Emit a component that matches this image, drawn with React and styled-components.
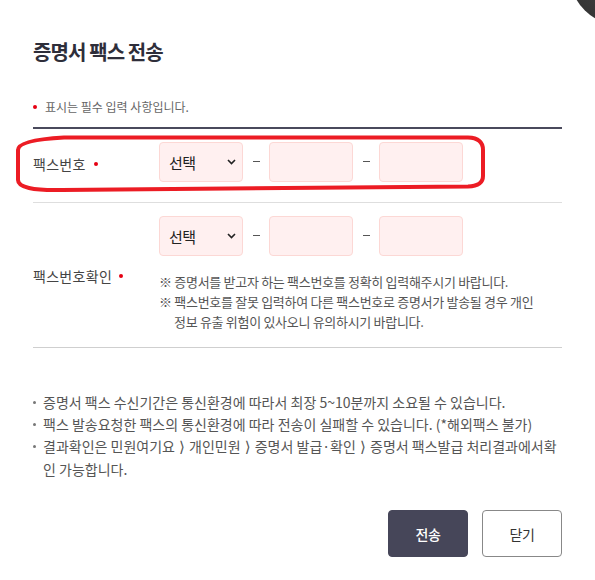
import React from 'react'
import styled, { createGlobalStyle } from 'styled-components'

// #region Styles
const GlobalStyle = createGlobalStyle`
  html, body {
    margin: 0;
    padding: 0;
    background: #fff;
  }
  body {
    font-family: "Noto Sans CJK KR", "Noto Sans", sans-serif;
    color: #333;
  }
  * {
    box-sizing: border-box;
  }
`
const Modal = styled.div`
  position: relative;
  width: 595px;
  height: 580px;
  padding: 38px 33px 0;
  overflow: hidden;
  background: #fff;
`
const CloseCorner = styled.div`
  position: absolute;
  top: -75px;
  left: 570px;
  width: 100px;
  height: 100px;
  border-radius: 50%;
  background: radial-gradient(circle at 60% 40%, #5a5a5a 0%, #3a3a3a 60%, #2e2e2e 100%);
`
const Title = styled.h2`
  margin: 0;
  font-size: 20px;
  line-height: 28px;
  font-weight: 700;
  color: #2e2e3a;
  letter-spacing: -0.9px;
`
const Notice = styled.p`
  display: flex;
  align-items: center;
  margin: 32px 0 11px;
  font-size: 12px;
  line-height: 18px;
  color: #666;
  letter-spacing: 0;
`
const Dot = styled.span`
  display: inline-block;
  flex: none;
  width: 4px;
  height: 4px;
  border-radius: 50%;
  background: #e60012;
  margin: ${({ $gap }) => $gap || '0 8px 0 0'};
`
const Form = styled.div`
  border-top: 2px solid #4a4a5c;
`
const Row = styled.div`
  display: flex;
  align-items: center;
  padding: 13px 0 ${({ $bottom }) => $bottom || '20px'};
  border-bottom: 1px solid ${({ $line }) => $line || '#dedede'};
`
const Label = styled.div`
  display: flex;
  align-items: center;
  flex: none;
  width: 126px;
  font-size: 14px;
  color: #444;
  letter-spacing: 0.3px;
  padding-top: 3px;
`
const Field = styled.div`
  display: flex;
  flex-direction: column;
`
const PhoneGroup = styled.div`
  display: flex;
  align-items: center;
`
const Select = styled.div`
  display: flex;
  align-items: center;
  justify-content: space-between;
  width: 84px;
  height: 40px;
  padding: 0 6px 0 9px;
  border: 1px solid #fcd8d5;
  border-radius: 4px;
  background: #fff0f0;
  font-size: 15px;
  color: #222;
  letter-spacing: -0.5px;
`
const Input = styled.input`
  width: 84px;
  height: 40px;
  border: 1px solid #fcd8d5;
  border-radius: 4px;
  background: #fff0f0;
  outline: none;
`
const Dash = styled.span`
  display: flex;
  justify-content: center;
  width: 26px;
  margin-top: -2px;

  &::before {
    content: '';
    width: 7px;
    height: 1px;
    background: #555;
  }
`
const Notes = styled.ul`
  list-style: none;
  margin: 16px 0 0;
  padding: 0;
  font-size: 13px;
  line-height: 20px;
  color: #555;
  letter-spacing: -0.3px;
`
const Note = styled.li`
  padding-left: 15px;
  text-indent: -15px;
  white-space: nowrap;
`
const Guide = styled.ul`
  list-style: none;
  margin: 43px 0 0;
  padding: 0;
  font-size: 14px;
  line-height: 22px;
  color: #555;
  letter-spacing: 0;
`
const GuideItem = styled.li`
  position: relative;
  padding-left: 10px;
  white-space: nowrap;

  &::before {
    content: '';
    position: absolute;
    left: 0;
    top: 10px;
    width: 3px;
    height: 3px;
    border-radius: 50%;
    background: #777;
  }
`
const Crumb = styled.span`
  font-family: "DejaVu Sans", sans-serif;
  font-size: 15px;
  margin: 0 1px;
`
const Buttons = styled.div`
  display: flex;
  justify-content: flex-end;
  gap: 14px;
  margin-top: 30px;
`
const Button = styled.button`
  width: 80px;
  height: 47px;
  border-radius: 4px;
  font-family: inherit;
  font-size: 14px;
  letter-spacing: -0.5px;
  cursor: pointer;
  border: 1px solid ${({ $primary }) => ($primary ? '#464659' : '#888')};
  background: ${({ $primary }) => ($primary ? '#464659' : '#fff')};
  color: ${({ $primary }) => ($primary ? '#fff' : '#333')};
  font-weight: ${({ $primary }) => ($primary ? 500 : 400)};
`
const Annotation = styled.svg`
  position: absolute;
  top: 0;
  left: 0;
  pointer-events: none;
`
// #endregion

const Chevron = () => (
  <svg width="9" height="6" viewBox="0 0 9 6" fill="none">
    <path d="M1 1l3.5 3.5L8 1" stroke="#222" strokeWidth="1.6" />
  </svg>
)

const PhoneInputs = () => (
  <PhoneGroup>
    <Select>
      선택
      <Chevron />
    </Select>
    <Dash />
    <Input />
    <Dash />
    <Input />
  </PhoneGroup>
)

const App = () => (
  <>
    <GlobalStyle />
    <Modal>
      <CloseCorner />
      <Title>증명서 팩스 전송</Title>

      <Notice>
        <Dot />
        표시는 필수 입력 사항입니다.
      </Notice>

      <Form>
        <Row>
          <Label>
            팩스번호
            <Dot $gap="0 0 0 8px" />
          </Label>
          <PhoneInputs />
        </Row>

        <Row $bottom="15px" $line="#cfcfcf">
          <Label>
            팩스번호확인
            <Dot $gap="0 0 0 7px" />
          </Label>
          <Field>
            <PhoneInputs />
            <Notes>
              <Note>※ 증명서를 받고자 하는 팩스번호를 정확히 입력해주시기 바랍니다.</Note>
              <Note>
                ※ 팩스번호를 잘못 입력하여 다른 팩스번호로 증명서가 발송될 경우 개인
                <br />
                정보 유출 위험이 있사오니 유의하시기 바랍니다.
              </Note>
            </Notes>
          </Field>
        </Row>
      </Form>

      <Guide>
        <GuideItem>증명서 팩스 수신기간은 통신환경에 따라서 최장 5~10분까지 소요될 수 있습니다.</GuideItem>
        <GuideItem>팩스 발송요청한 팩스의 통신환경에 따라 전송이 실패할 수 있습니다. (*해외팩스 불가)</GuideItem>
        <GuideItem>
          결과확인은 민원여기요 <Crumb>⟩</Crumb> 개인민원 <Crumb>⟩</Crumb> 증명서 발급·확인{' '}
          <Crumb>⟩</Crumb> 증명서 팩스발급 처리결과에서확
          <br />
          인 가능합니다.
        </GuideItem>
      </Guide>

      <Buttons>
        <Button $primary>전송</Button>
        <Button>닫기</Button>
      </Buttons>

      <Annotation width="595" height="580" viewBox="0 0 595 580">
        <path
          d="M64 137.5 L468 137.5 Q483 138 483 150 L483 176 Q483 186 468 186.5 L62 190 Q18 191 18 180 L18 150 Q18 140 64 137.5 Z"
          fill="none"
          stroke="#ec1c24"
          strokeWidth="4"
        />
      </Annotation>
    </Modal>
  </>
)

export default App
